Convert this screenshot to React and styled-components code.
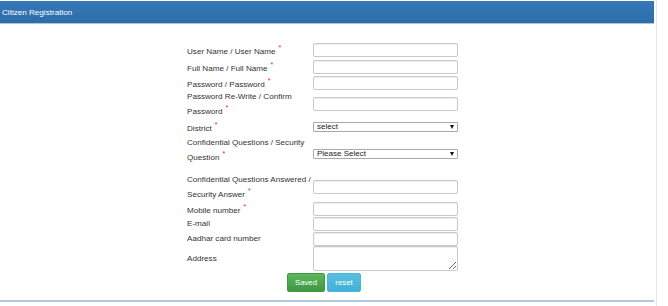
import React from "react";
import styled, { createGlobalStyle } from "styled-components";

const Global = createGlobalStyle`
  html, body { margin: 0; padding: 0; background: #fff; }
  body { font-family: "Liberation Sans", Arial, sans-serif; }
`;

const Page = styled.div`
  width: 657px;
  height: 306px;
  border-right: 1px solid #e6e6e6;
  box-sizing: border-box;
  padding-top: 1px;
`;

const Panel = styled.section`
  width: 654px;
  border-bottom: 2px solid #afc9e4;
`;

const Heading = styled.header`
  height: 22px;
  display: flex;
  align-items: center;
  padding-left: 2px;
  background: linear-gradient(#3679b8, #2d6ca9);
  border-bottom: 1px solid #a8c7e6;
  color: #fff;
  font-size: 8.1px;
`;

const Body = styled.div`
  padding: 18px 0 8px 187px;
`;

const Row = styled.div`
  display: flex;
  align-items: center;
  height: ${(p) => p.$h}px;
  margin-top: ${(p) => p.$gap || 0}px;
`;

const Label = styled.label`
  width: 126px;
  flex-shrink: 0;
  box-sizing: border-box;
  padding-top: ${(p) => (p.$low ? 3 : 0)}px;
  font-size: 8.1px;
  line-height: 15px;
  color: #333;
  white-space: nowrap;
`;

const Req = styled.span`
  color: #e8242a;
  font-size: 7px;
  line-height: 0;
  vertical-align: 4px;
  margin-left: 3px;
`;

const Input = styled.input`
  display: block;
  box-sizing: border-box;
  width: 145px;
  height: 14px;
  margin: 0;
  padding: 0 3px;
  border: 1px solid #c9c9c9;
  border-radius: 2px;
  box-shadow: inset 0 1px 1px rgba(0, 0, 0, 0.07);
  font-size: 8px;
  outline: none;
`;

const Area = styled.textarea`
  display: block;
  box-sizing: border-box;
  width: 145px;
  height: 25px;
  margin: 0;
  padding: 0 3px;
  border: 1px solid #c9c9c9;
  border-radius: 2px;
  box-shadow: inset 0 1px 1px rgba(0, 0, 0, 0.07);
  font-size: 8px;
  outline: none;
`;

const SelectWrap = styled.div`
  position: relative;
  width: 145px;
  height: 10px;
  margin-top: ${(p) => p.$shift || 0}px;
`;

const Select = styled.select`
  display: block;
  appearance: none;
  -webkit-appearance: none;
  box-sizing: border-box;
  width: 145px;
  height: 10px;
  min-height: 0;
  margin: 0;
  padding: 0 0 0 3px;
  border: 1px solid #a9a9a9;
  border-radius: 1px;
  background: #fff;
  color: #222;
  font-family: "Liberation Sans", Arial, sans-serif;
  font-size: 8px;
  line-height: 8px;
  outline: none;
`;

const Arrow = styled.span`
  position: absolute;
  right: 4px;
  top: 3px;
  width: 0;
  height: 0;
  border-left: 2.5px solid transparent;
  border-right: 2.5px solid transparent;
  border-top: 4px solid #111;
  pointer-events: none;
`;

const Actions = styled.div`
  display: flex;
  gap: 2px;
  margin-top: 2px;
  padding-left: 100px;
`;

const Button = styled.button`
  box-sizing: border-box;
  height: 19px;
  width: ${(p) => p.$w}px;
  margin: 0;
  padding: 0;
  border-radius: 2px;
  border: 1px solid ${(p) => (p.$variant === "success" ? "#3e9a3e" : "#46b8da")};
  background: ${(p) =>
    p.$variant === "success"
      ? "linear-gradient(#5cb85c, #419641)"
      : "linear-gradient(#5bc0de, #3fb1d6)"};
  color: #fff;
  font-family: "Liberation Sans", Arial, sans-serif;
  font-size: 7.8px;
`;

const Field = ({ label, req, lines }) => (
  <Label $low={req && !lines}>
    {lines
      ? lines.map((l, i) => (
          <React.Fragment key={i}>
            {l}
            {i === lines.length - 1 && req && <Req>*</Req>}
            {i < lines.length - 1 && <br />}
          </React.Fragment>
        ))
      : (
        <>
          {label}
          {req && <Req>*</Req>}
        </>
      )}
  </Label>
);

export default function App() {
  return (
    <>
      <Global />
      <Page>
        <Panel>
          <Heading>Citizen Registration</Heading>
          <Body>
            <Row $h={16}>
              <Field label="User Name / User Name" req />
              <Input />
            </Row>
            <Row $h={17}>
              <Field label="Full Name / Full Name" req />
              <Input />
            </Row>
            <Row $h={16}>
              <Field label="Password / Password" req />
              <Input type="password" />
            </Row>
            <Row $h={26}>
              <Field lines={["Password Re-Write / Confirm", "Password"]} req />
              <Input type="password" />
            </Row>
            <Row $h={19}>
              <Field label="District" req />
              <SelectWrap>
                <Select defaultValue="select">
                  <option value="select">select</option>
                </Select>
                <Arrow />
              </SelectWrap>
            </Row>
            <Row $h={28}>
              <Field lines={["Confidential Questions / Security", "Question"]} req />
              <SelectWrap $shift={8}>
                <Select defaultValue="ps">
                  <option value="ps">Please Select</option>
                </Select>
                <Arrow />
              </SelectWrap>
            </Row>
            <Row $h={29} $gap={8}>
              <Field lines={["Confidential Questions Answered /", "Security Answer"]} req />
              <Input />
            </Row>
            <Row $h={15}>
              <Field label="Mobile number" req />
              <Input />
            </Row>
            <Row $h={15}>
              <Field label="E-mail" />
              <Input />
            </Row>
            <Row $h={15}>
              <Field label="Aadhar card number" />
              <Input />
            </Row>
            <Row $h={25}>
              <Field label="Address" />
              <Area />
            </Row>
            <Actions>
              <Button $variant="success" $w={38}>Saved</Button>
              <Button $variant="info" $w={34}>reset</Button>
            </Actions>
          </Body>
        </Panel>
      </Page>
    </>
  );
}
